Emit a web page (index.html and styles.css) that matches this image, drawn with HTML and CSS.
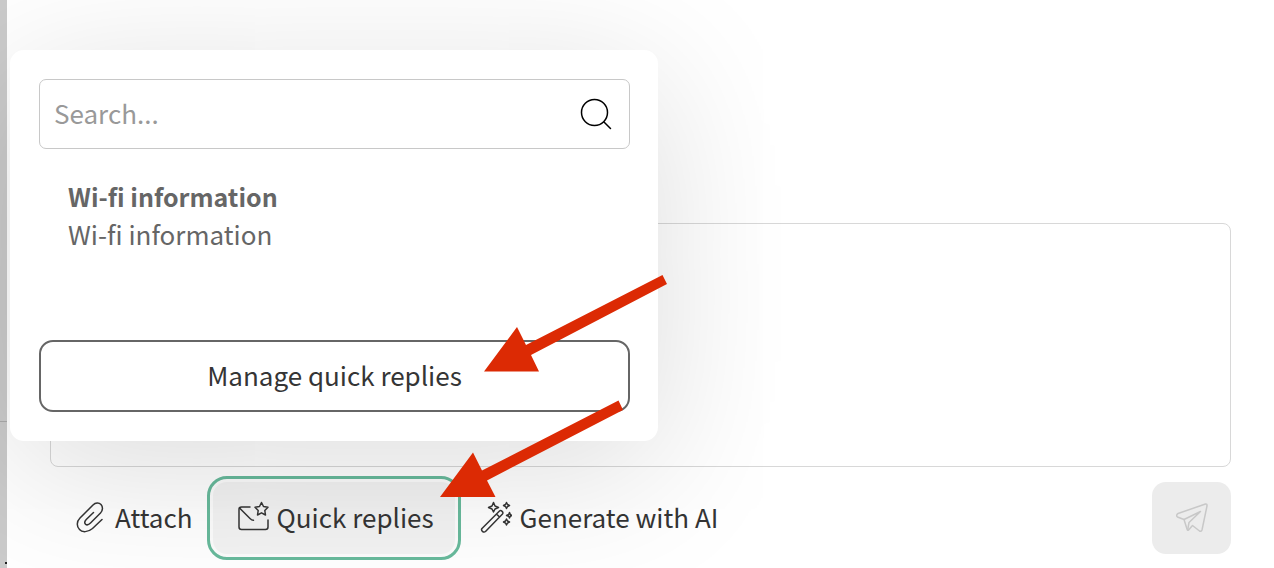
FILE: index.html
```
<!DOCTYPE html>
<html lang="en">
  <head>
    <meta charset="UTF-8" />
    <meta name="viewport" content="width=device-width, initial-scale=1.0" />
    <title>Quick replies</title>
    <link rel="stylesheet" href="styles.css">
  </head>
  <body>
    <aside class="sidebar">
      <div class="sidebar-item"></div>
      <span class="sidebar-dot"></span>
    </aside>

    <main class="chat">
      <textarea class="message" aria-label="Message"></textarea>

      <div class="toolbar">
        <button class="tool" type="button">
          <svg class="icon" viewBox="0 0 32 32">
            <path d="M27 18.500 17.500 27.500C13 31.500 7 31.500 4.500 28.500C1.500 25.500 1.500 20.500 5 17L18 4C20.500 1.500 24 1.500 26 3.500C28 5.700 28 9.500 25.500 12L15.500 22C13.500 24 11.800 24.400 10.500 23.200C9.200 22 9.600 20.200 11.500 18.300L18.500 11.500" />
          </svg>
          Attach
        </button>
        <button class="tool tool-active" type="button">
          <svg class="icon" viewBox="0 0 32 32">
            <path d="M13 6H4.500C3 6 2 7 2 8.500V26C2 27.500 3 28.500 4.500 28.500H28.500C30 28.500 31 27.500 31 26V19" />
            <path d="M2.500 7 13 17.500C14 18.500 15 19.500 16.500 19.300" />
            <path d="M24.500 1.500 26.500 5.500 31 6.200 27.800 9.500 28.500 14 24.500 11.800 20.500 14 21.200 9.500 18 6.200 22.500 5.500Z" />
          </svg>
          Quick replies
        </button>
        <button class="tool" type="button">
          <svg class="icon" viewBox="0 0 32 32">
            <path d="M2 27.500 19.500 10C21 8.500 24 11.500 22.500 13L5.500 30.500C3.500 32 .5 29.500 2 27.500ZM16.500 13 19.500 16" />
            <path d="M13.500 1.500 15 5 18.500 6.500 15 8 13.500 11 12 8 8.500 6.500 12 5Z" />
            <path d="M26.500 1.500 27.500 3.500 29.500 4.500 27.500 5.500 26.500 7.500 25.500 5.500 23.500 4.500 25.500 3.500ZM29.500 11.500 30.300 13.500 32 14.500 30.300 15.300 29.500 17 28.700 15.300 26.500 14.500 28.700 13.500ZM26.500 18 27.500 20 29.500 21 27.500 22 26.500 24 25.500 22 23.500 21 25.500 20Z" />
          </svg>
          Generate with AI
        </button>
        <button class="send" type="button" aria-label="Send" disabled>
          <svg class="icon" viewBox="0 0 32 32">
            <path d="M29.500 2 2 11.500C.5 12.200 .3 14 1.500 15L8 17.500 11 27C11.300 28.500 12.300 28.500 13 27.500L16.500 23.500 23.500 29C24.500 29.500 25.500 29.300 26 28L31 4C31.200 2.500 30.500 1.700 29.500 2Z" />
            <path d="M8 17.500 24.500 9.500 13 20.500 11.700 28" />
          </svg>
        </button>
      </div>

      <section class="popup">
        <div class="search">
          <input class="search-input" type="text" placeholder="Search..." aria-label="Search quick replies" />
          <svg class="icon search-icon" viewBox="0 0 32 32">
            <circle cx="14.500" cy="14.500" r="13" />
            <path d="M24 24 30.500 30.500" />
          </svg>
        </div>
        <div class="reply">
          <strong class="reply-title">Wi-fi information</strong>
          <span>Wi-fi information</span>
        </div>
        <button class="manage" type="button">Manage quick replies</button>
      </section>

      <svg class="arrows" viewBox="0 0 226 226" aria-hidden="true">
        <path d="M221.500 -4 226 5 90 76 98 92.500H43L76 48 85 66Z" />
        <path d="M177.500 121.500 182 131 46 201.500 54.500 218H-1L32 173.500 41 191.500Z" />
      </svg>
    </main>
  </body>
</html>
```

FILE: styles.css
```
* {
  box-sizing: border-box;
}
body {
  display: flex;
  min-height: 100vh;
  margin: 0;
  background: white;
  color: #353535;
  font: 26px/38px "Noto Sans CJK SC", "Open Sans", sans-serif;
}
button,
input,
textarea {
  font: inherit;
  color: inherit;
}
.sidebar {
  display: flex;
  flex-direction: column;
  justify-content: space-between;
  align-items: flex-end;
  width: 7px;
  background: #cbcbcb;
}
.sidebar-item {
  width: 100%;
  height: 422px;
  border-bottom: 1px solid #aaa;
}
.sidebar-dot {
  width: 2px;
  height: 2px;
  margin-bottom: 4px;
  background: #222;
}
.chat {
  position: relative;
  display: flex;
  flex: 1;
  flex-direction: column;
  justify-content: flex-end;
  gap: 9px;
  padding: 0 43px 8px;
}
.message {
  height: 244px;
  padding: 16px;
  border: 1px solid #d8d8d8;
  border-radius: 8px;
  background: white;
  resize: none;
}
.toolbar {
  display: flex;
  align-items: center;
}
.tool {
  display: flex;
  align-items: center;
  gap: 8px;
  height: 84px;
  padding: 0 11px 2px 22px;
  border: 3px solid transparent;
  border-radius: 20px;
  background: none;
  white-space: nowrap;
}
.tool-active {
  padding: 0 24px 2px 27px;
  border-color: #68ba9c;
  background: #f3f3f3;
  box-shadow: inset 0 0 0 3px #fcfcfc;
}
.tool-active + .tool {
  padding-left: 16px;
}
.icon {
  flex: none;
  width: 32px;
  height: 32px;
  fill: none;
  stroke: currentColor;
  stroke-width: 1.5;
  stroke-linecap: round;
  stroke-linejoin: round;
}
.send {
  display: flex;
  align-items: center;
  justify-content: center;
  width: 79px;
  height: 72px;
  margin-left: auto;
  border: none;
  border-radius: 14px;
  background: #ececec;
  color: #c8c8c8;
}
.popup {
  position: absolute;
  left: 3px;
  bottom: 127px;
  display: flex;
  flex-direction: column;
  width: 648px;
  padding: 29px 28px 29px 29px;
  border-radius: 14px;
  background: white;
  box-shadow: 0 28px 150px rgba(0, 0, 0, 0.14);
}
.search {
  display: flex;
  align-items: center;
  height: 70px;
  padding: 0 17px 0 14px;
  border: 1px solid #c8c8c8;
  border-radius: 7px;
}
.search-input {
  flex: 1;
  min-width: 0;
  padding: 0 0 2px;
  border: none;
  outline: none;
  background: none;
}
.search-input::placeholder {
  color: #999;
  opacity: 1;
}
.search-icon {
  color: black;
}
.reply {
  display: flex;
  flex-direction: column;
  height: 191px;
  padding: 28px 29px;
  color: #666;
}
.reply-title {
  font-size: 25px;
}
.manage {
  height: 72px;
  padding: 0 0 2px;
  border: 2px solid #666;
  border-radius: 14px;
  background: white;
}
.arrows {
  position: absolute;
  left: 434px;
  bottom: 63px;
  width: 226px;
  height: 226px;
  overflow: visible;
  fill: #dc2a04;
  pointer-events: none;
}
```
